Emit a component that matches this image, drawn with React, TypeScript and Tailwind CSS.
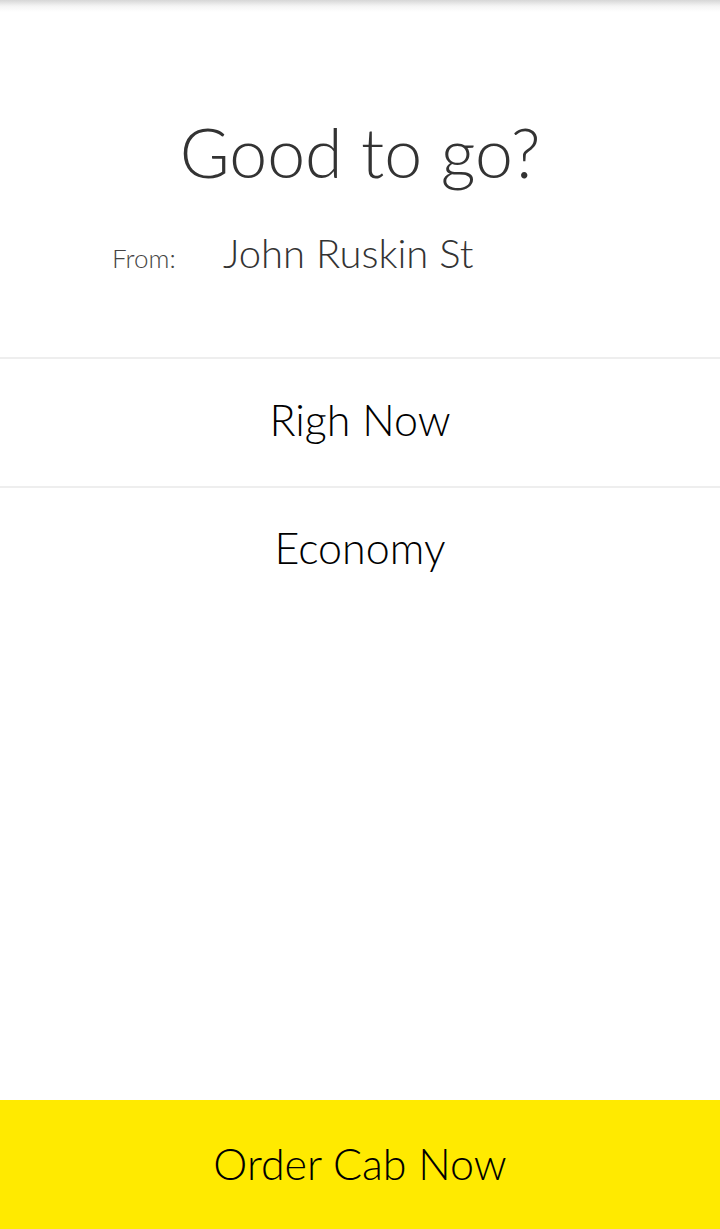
import React from "react";

export default function App() {
  return (
    <div
      className="flex h-[1229px] w-[720px] flex-col bg-white"
      style={{ fontFamily: "Lato, 'Open Sans', sans-serif" }}
    >
      <div className="h-[12px] w-full bg-gradient-to-b from-[#d6d6d6] via-[#f4f4f4] to-white" />
      <div className="flex h-[345px] flex-col">
        <h1 className="mt-[100px] text-center text-[68px] font-light leading-[80px] text-[#333]">
          Good to go?
        </h1>
        <div className="mt-[31px] flex items-baseline pl-[112px]">
          <span className="w-[111px] text-[26px] font-light text-[#444]">From:</span>
          <span className="text-[40px] font-light text-[#333]">John Ruskin St</span>
        </div>
      </div>
      <div className="flex h-[131px] items-center justify-center border-y-2 border-[#eeeeee] pb-[4px]">
        <span className="text-[43px] font-light text-black">Righ Now</span>
      </div>
      <div className="flex h-[127px] items-center justify-center pb-[6px]">
        <span className="text-[43px] font-light text-black">Economy</span>
      </div>
      <div className="flex-1" />
      <div className="flex h-[129px] items-center justify-center bg-[#ffea00] pb-[1px]">
        <span className="text-[43px] font-light text-black">Order Cab Now</span>
      </div>
    </div>
  );
}
